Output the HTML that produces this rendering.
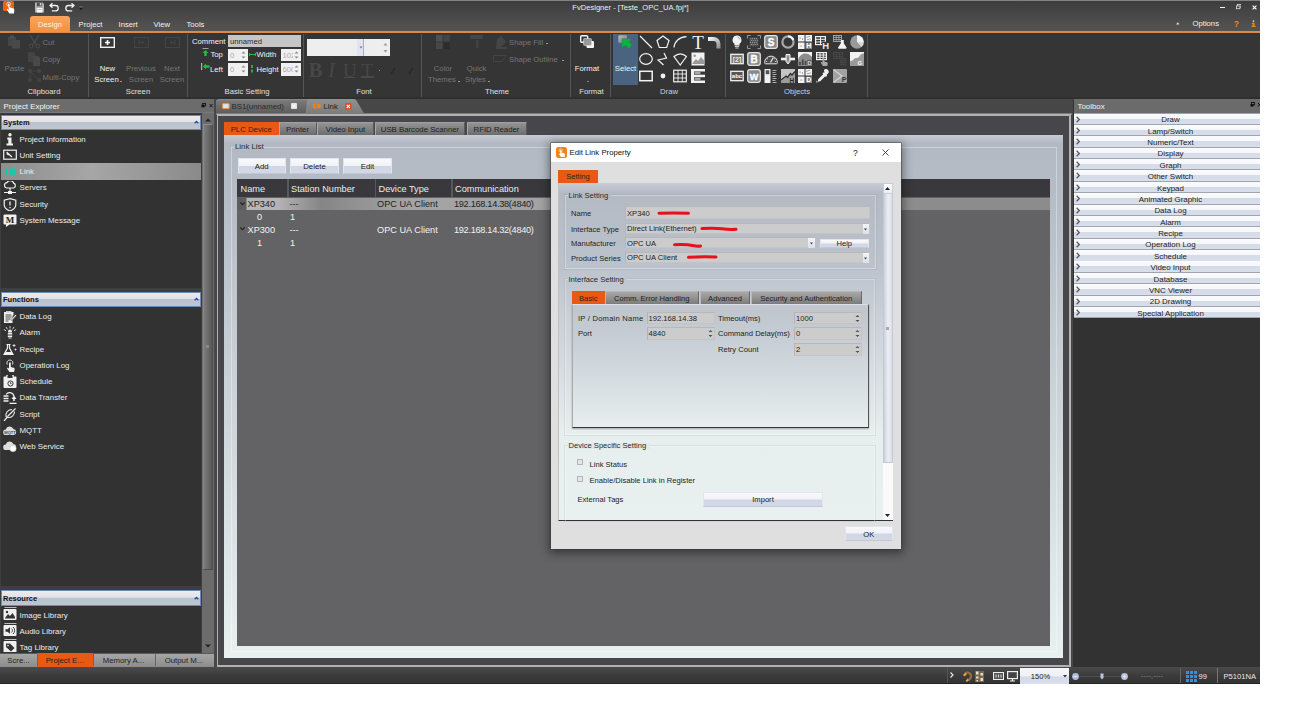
<!DOCTYPE html>
<html><head><meta charset="utf-8"><title>FvDesigner - [Teste_OPC_UA.fpj*]</title>
<style>
*{box-sizing:border-box;margin:0;padding:0}
html,body{width:1300px;height:707px;background:#fff;overflow:hidden}
body{font-family:"Liberation Sans",sans-serif;font-size:8px;color:#e6e6e6;position:relative}
.a{position:absolute}
.t{position:absolute;white-space:nowrap;line-height:10px;height:10px}
.c{text-align:center}
#app{position:absolute;left:0;top:0;width:1260px;height:684px;background:#333;overflow:hidden}
/* title */
#title{left:0;top:0;width:1260px;height:31px;background:linear-gradient(#3d3d3d,#545454);border-top:1px solid #828282}
#oline{left:0;top:31px;width:1260px;height:2px;background:#dc8a48}
#ribbon{left:0;top:33px;width:1260px;height:65px;background:#353535}
.sep{position:absolute;top:34px;width:1px;height:63px;background:#555}
.dis{color:#757575}
.rl{color:#e0e0e0}
/* left */
.ph{background:#6a6a6a;color:#f0f0f0}
.sec{position:absolute;left:1px;width:200px;height:15px;background:linear-gradient(#ececee 0%,#e0e2e6 45%,#bac2d0 50%,#bec6d4 100%);border:1px solid #6f88b8;color:#111;font-weight:bold}
.li{position:absolute;left:19.5px;white-space:nowrap;line-height:10px;color:#ececec}
.ico{position:absolute;left:3px;width:14px;height:13px}
.tb{background:linear-gradient(#949494,#6c6c6c);border-left:1px solid #a8a8a8;border-top:1px solid #a0a0a0;border-right:1px solid #5a5a5a}
.btn{background:linear-gradient(#f8f9fc 0%,#f0f2f8 48%,#d0d6e4 52%,#d3d9e7 100%);border:1px solid #e2e5ee;border-bottom-color:#c2c8d8}
.th{font-size:9.200px;color:#ececec;line-height:11px;height:11px}
.td{font-size:9.200px;color:#f2f2f2;line-height:11px;height:11px}
.tb2{background:linear-gradient(#a8a8a8,#7c7c7c);border-left:1px solid #b8b8b8;border-top:1px solid #b4b4b4;border-right:1px solid #686868}
.gb{border:1px solid rgba(255,255,255,.32);box-shadow:0 0 0 1px rgba(120,135,150,.14)}
.dl{font-size:7.600px;color:#222}
.inp{background:#cccccc;border:1px solid #c4c4c6;border-top-color:#b8b8ba;border-left-color:#b4b4b8}
.dd{background:linear-gradient(#f4f4f8,#dcdfe8)}
.tbi{background:linear-gradient(#fbfbfd 0%,#f6f7fa 45%,#d5dbe7 50%,#d8deea 100%)}
</style></head><body>
<div id="app">
<div id="title" class="a"></div>
<div id="oline" class="a"></div>
<div id="ribbon" class="a"></div>
<!-- part_title.html -->
<!-- app icon -->
<svg class="a" style="left:3px;top:1px" width="14" height="15" viewBox="0 0 14 15"><rect x="0" y="0" width="11" height="10" rx="1.5" fill="#e8631a"/><path d="M5 3.2c0-.9 1.4-.9 1.4 0v3l3.6 1c1 .3 1.4.8 1.300 1.800l-.3 3.500h-4.600l-2.400-3.400c-.5-.8.500-1.500 1.100-.800l.9.900z" fill="#fff"/><circle cx="5.700" cy="3.200" r="1.900" fill="none" stroke="#fff" stroke-width=".6"/></svg>
<!-- quick access -->
<svg class="a" style="left:34px;top:2px" width="50" height="11" viewBox="0 0 50 11"><path d="M1 .5h7.500l1.500 1.500v8.500h-9z" fill="#b4b4b4"/><rect x="2.800" y=".5" width="5" height="3.800" fill="#505050"/><rect x="5.800" y="1" width="1.400" height="2.500" fill="#d0d0d0"/><rect x="2.800" y="6" width="5.600" height="4.500" fill="#fafafa"/><path d="M3.500 7.500h4" stroke="#aaa" stroke-width=".7"/>
<path d="M18.500 1.200l-2.500 2.300 2.500 2.300M16.300 3.500h5.200a2.600 2.600 0 0 1 0 5.400h-3.700" fill="none" stroke="#f0f0f0" stroke-width="1.300"/>
<path d="M37.500 1.200l2.500 2.300-2.500 2.300M39.700 3.500h-5.200a2.600 2.600 0 0 0 0 5.400h3.700" fill="none" stroke="#f0f0f0" stroke-width="1.300"/>
<path d="M45.500 4.800h3" stroke="#888" stroke-width=".7"/><path d="M45.300 6h3.400l-1.700 2z" fill="#151515"/></svg>
<div class="t c" style="left:530.500px;top:2.500px;width:200px;color:#ededed;font-size:7.600px">FvDesigner - [Teste_OPC_UA.fpj*]</div>
<!-- window buttons -->
<div class="a" style="left:1220px;top:6.500px;width:4.500px;height:1.500px;background:#f4f4f4"></div>
<svg class="a" style="left:1235.500px;top:4px" width="5.500" height="5.500" viewBox="0 0 7 7"><rect x="2" y=".5" width="4.500" height="3.500" fill="none" stroke="#ddd" stroke-width="1"/><rect x=".5" y="2.500" width="4.500" height="3.500" fill="#444" stroke="#ddd" stroke-width="1"/></svg>
<svg class="a" style="left:1251.500px;top:4.500px" width="5" height="5" viewBox="0 0 6 6"><path d="M.7.700l4.600 4.600M5.300.700l-4.600 4.600" stroke="#fff" stroke-width="1.400"/></svg>
<!-- menu tabs -->
<div class="a" style="left:30px;top:16px;width:40px;height:16px;background:linear-gradient(#f9a45a,#f4913e);border-radius:3px 3px 0 0"></div>
<div class="t c" style="left:30px;top:20px;width:40px;color:#fff3e6;font-size:7.700px">Design</div>
<div class="t" style="left:78.500px;top:20px;font-size:7.700px;color:#f2f2f2">Project</div>
<div class="t" style="left:118.500px;top:20px;font-size:7.700px;color:#f2f2f2">Insert</div>
<div class="t" style="left:153.500px;top:20px;font-size:7.700px;color:#f2f2f2">View</div>
<div class="t" style="left:186.500px;top:20px;font-size:7.700px;color:#f2f2f2">Tools</div>
<svg class="a" style="left:1175.500px;top:22px" width="3.600" height="2.800" viewBox="0 0 5 4"><path d="M0 3.500l2.500-3 2.500 3z" fill="#ddd"/></svg>
<div class="t" style="left:1192.500px;top:19px;font-size:7.700px;color:#f2f2f2">Options</div>
<div class="t" style="left:1233.800px;top:19px;font-size:8.500px;font-weight:bold;color:#f0821e">?</div>
<svg class="a" style="left:1250.500px;top:20px" width="5" height="7.500" viewBox="0 0 6 9"><circle cx="3" cy="1.300" r="1.100" fill="#ccc"/><path d="M1 3.300h3.300v3.700h1.200v1.500h-5v-1.500h1.500v-2.200h-1z" fill="#f0821e"/></svg>

<!-- part_ribbon.html -->
<!-- separators -->
<div class="sep" style="left:88px"></div><div class="sep" style="left:187px"></div><div class="sep" style="left:303px"></div>
<div class="sep" style="left:421px"></div><div class="sep" style="left:570px"></div><div class="sep" style="left:610px"></div>
<div class="sep" style="left:725px"></div><div class="sep" style="left:867px"></div>
<!-- Clipboard -->
<svg class="a" style="left:8px;top:35px" width="13" height="14" viewBox="0 0 13 14" opacity=".55"><rect x="0" y="2" width="8" height="9" fill="#555"/><rect x="2" y=".5" width="4" height="3" fill="#666"/><rect x="4" y="5" width="8" height="8.500" fill="#5a5a5a"/></svg>
<div class="t dis" style="left:4.500px;top:64px;font-size:7.700px">Paste</div>
<svg class="a" style="left:28px;top:34px" width="13" height="15" viewBox="0 0 13 15"><path d="M2 1l6.500 10M11 1l-6.500 10" stroke="#4c4c4c" stroke-width="1.300" fill="none"/><circle cx="3" cy="12" r="2" fill="none" stroke="#4a4a4a" stroke-width="1"/><circle cx="10" cy="12" r="2" fill="none" stroke="#4a4a4a" stroke-width="1"/></svg>
<div class="t dis" style="left:42.500px;top:37.500px;font-size:7.700px">Cut</div>
<svg class="a" style="left:28px;top:52px" width="13" height="14" viewBox="0 0 13 14"><path d="M0 0h5l2 2v8h-7z" fill="#434343"/><path d="M5 4h5l2 2v8h-7z" fill="#494949"/></svg>
<div class="t dis" style="left:42.500px;top:55px;font-size:7.700px">Copy</div>
<svg class="a" style="left:27px;top:68px" width="15" height="15" viewBox="0 0 15 15"><path d="M3 3l9 0M3 3l0 9M3 3l9 9" stroke="#434343" stroke-width="1" fill="none"/><circle cx="3" cy="3" r="2" fill="#444"/><circle cx="12" cy="3" r="2" fill="#444"/><circle cx="3" cy="12" r="2" fill="#444"/><circle cx="12" cy="12" r="2" fill="#444"/></svg>
<div class="t dis" style="left:42.500px;top:72.500px;font-size:7.700px">Multi-Copy</div>
<div class="t c rl" style="left:14px;top:86.500px;width:60px;font-size:7.700px">Clipboard</div>
<!-- Screen -->
<svg class="a" style="left:100px;top:37px" width="15" height="11" viewBox="0 0 15 11"><rect x=".7" y=".7" width="13.600" height="9.600" fill="none" stroke="#f0f0f0" stroke-width="1.400"/><path d="M5 5.500h5M7.500 3v5" stroke="#fff" stroke-width="1.600"/></svg>
<svg class="a" style="left:134px;top:37px" width="15" height="11" viewBox="0 0 15 11"><rect x=".5" y=".5" width="14" height="10" fill="none" stroke="#444" stroke-width="1"/><path d="M5 3v5M6 5.500h4M8 4l2 1.500-2 1.500" stroke="#444" stroke-width="1" fill="none"/></svg>
<svg class="a" style="left:165px;top:37px" width="15" height="11" viewBox="0 0 15 11"><rect x=".5" y=".5" width="14" height="10" fill="none" stroke="#444" stroke-width="1"/><path d="M10 3v5M5 5.500h4M7 4l-2 1.500 2 1.500" stroke="#444" stroke-width="1" fill="none"/></svg>
<div class="t c" style="left:92px;top:64px;width:31px;font-size:7.700px;color:#f2f2f2">New</div>
<div class="t c" style="left:91px;top:74.500px;width:31px;font-size:7.700px;color:#f2f2f2">Screen</div>
<div class="a" style="left:120px;top:81px;width:2px;height:1px;background:#999"></div>
<div class="t c dis" style="left:121px;top:64px;width:40px;font-size:7.700px">Previous</div>
<div class="t c dis" style="left:121px;top:74.500px;width:40px;font-size:7.700px">Screen</div>
<div class="t c dis" style="left:152px;top:64px;width:40px;font-size:7.700px">Next</div>
<div class="t c dis" style="left:152px;top:74.500px;width:40px;font-size:7.700px">Screen</div>
<div class="t c rl" style="left:108px;top:86.500px;width:60px;font-size:7.700px">Screen</div>
<!-- Basic Setting -->
<div class="t" style="left:192px;top:37px;font-size:7.700px;color:#f4f4f4">Comment</div>
<div class="a" style="left:228px;top:35px;width:73px;height:12px;background:#c6c6c6"></div>
<div class="t" style="left:230px;top:37px;font-size:7.700px;color:#2a2a2a">unnamed</div>
<svg class="a" style="left:202px;top:48px" width="8" height="9" viewBox="0 0 8 9"><path d="M.5.500h6" stroke="#bbb" stroke-width=".8"/><path d="M3.500 2l3 3h-1.800v3h-2.400v-3h-1.800z" fill="#19c13c"/></svg>
<div class="t" style="left:210.500px;top:50px;font-size:7.700px;color:#f4f4f4">Top</div>
<svg class="a" style="left:201px;top:63px" width="10" height="8" viewBox="0 0 10 8"><path d="M.7 0v7" stroke="#ccc" stroke-width="1"/><path d="M2 3.500l3-3v1.800h3.500v2.400h-3.500v1.800z" fill="#19c13c"/></svg>
<div class="t" style="left:210px;top:64.500px;font-size:7.700px;color:#f4f4f4">Left</div>
<div class="a" style="left:228px;top:49px;width:19.500px;height:12px;background:#f0f0f0"></div>
<div class="a" style="left:228px;top:63px;width:19.500px;height:12.500px;background:#f0f0f0"></div>
<div class="a" style="left:281px;top:49px;width:19.500px;height:12px;background:#f0f0f0"></div>
<div class="a" style="left:281px;top:63px;width:19.500px;height:12.500px;background:#f0f0f0"></div>
<div class="t" style="left:230px;top:51px;font-size:7.700px;color:#aaa">0</div>
<div class="t" style="left:230px;top:65px;font-size:7.700px;color:#aaa">0</div>
<div class="t" style="left:282.500px;top:51px;font-size:7.700px;color:#aaa;width:10px;overflow:hidden">102</div>
<div class="t" style="left:282.500px;top:65px;font-size:7.700px;color:#aaa;width:10.500px;overflow:hidden">600</div>
<svg class="a" style="left:241px;top:50px" width="5" height="24" viewBox="0 0 5 24"><path d="M.5 3.500l2-2 2 2zM.5 6.500l2 2 2-2zM.5 17.500l2-2 2 2zM.5 20.500l2 2 2-2z" fill="#888"/></svg>
<svg class="a" style="left:294px;top:50px" width="5" height="24" viewBox="0 0 5 24"><path d="M.5 3.500l2-2 2 2zM.5 6.500l2 2 2-2zM.5 17.500l2-2 2 2zM.5 20.500l2 2 2-2z" fill="#888"/></svg>
<svg class="a" style="left:249px;top:52px" width="7" height="5" viewBox="0 0 7 5"><path d="M0 2.500h7M.5 1v3M6.500 1v3" stroke="#19c13c" stroke-width="1.200"/></svg>
<div class="t" style="left:256.500px;top:50px;font-size:7.700px;color:#f4f4f4">Width</div>
<svg class="a" style="left:250px;top:65px" width="4" height="8" viewBox="0 0 4 8"><path d="M2 0v3M2 4.500v3" stroke="#19c13c" stroke-width="1.800"/></svg>
<div class="t" style="left:256.500px;top:64.500px;font-size:7.700px;color:#f4f4f4">Height</div>
<div class="t c rl" style="left:207px;top:86.500px;width:80px;font-size:7.700px">Basic Setting</div>
<!-- Font -->
<div class="a" style="left:307px;top:39px;width:83px;height:17px;background:#eeeeee"></div>
<div class="a" style="left:357px;top:39px;width:6.500px;height:17px;background:#dfe4f0;border-right:1px solid #a8b0c8"></div>
<svg class="a" style="left:358.500px;top:46px" width="4" height="3" viewBox="0 0 4 3"><path d="M.5.500h3l-1.500 2z" fill="#777"/></svg>
<svg class="a" style="left:383px;top:42px" width="5" height="12" viewBox="0 0 5 12"><path d="M.5 3.500l2-2.500 2 2.500zM.5 8l2 2.500 2-2.500z" fill="#999"/></svg>
<div class="t" style="left:308.500px;top:58px;font-family:'Liberation Serif',serif;font-weight:bold;font-size:21px;line-height:24px;height:24px;color:#474747">B</div>
<div class="t" style="left:328px;top:58px;font-family:'Liberation Serif',serif;font-style:italic;font-size:21px;line-height:24px;height:24px;color:#474747">I</div>
<div class="t" style="left:343px;top:58.500px;font-family:'Liberation Serif',serif;font-size:19px;line-height:24px;height:24px;color:#464646">U</div>
<div class="a" style="left:343.500px;top:77px;width:11px;height:1px;background:#4c4c4c"></div>
<div class="t" style="left:361.500px;top:58.500px;font-family:'Liberation Serif',serif;font-size:19px;line-height:24px;height:24px;color:#464646">T</div>
<div class="a" style="left:361px;top:75.500px;width:13px;height:2px;background:#4a4a4a"></div>
<div class="a" style="left:378.500px;top:70px;width:1.500px;height:1px;background:#999"></div>
<svg class="a" style="left:390px;top:66px" width="26" height="10" viewBox="0 0 26 10"><path d="M1 8l4-6M19 8l4-6" stroke="#2a2a2a" stroke-width="1.600"/></svg>
<div class="t c rl" style="left:334px;top:86.500px;width:60px;font-size:7.700px">Font</div>
<!-- Theme -->
<svg class="a" style="left:436px;top:35px" width="14" height="14" viewBox="0 0 14 14"><rect x="0" y="0" width="6.500" height="6.500" fill="#505050"/><rect x="7.500" y="0" width="6.500" height="6.500" fill="#444"/><rect x="0" y="7.500" width="6.500" height="6.500" fill="#484848"/><rect x="7.500" y="7.500" width="6.500" height="6.500" fill="#2c2c2c"/></svg>
<svg class="a" style="left:470px;top:35px" width="14" height="14" viewBox="0 0 14 14"><rect x="0" y="0" width="13" height="4" rx="1" fill="#454545"/><rect x="6" y="5" width="2.500" height="8" fill="#414141"/></svg>
<div class="t c dis" style="left:423px;top:64px;width:40px;font-size:7.700px">Color</div>
<div class="t c dis" style="left:422px;top:74.500px;width:40px;font-size:7.700px">Themes</div>
<div class="a" style="left:458px;top:81px;width:2px;height:1px;background:#999"></div>
<div class="t c dis" style="left:456.500px;top:64px;width:40px;font-size:7.700px">Quick</div>
<div class="t c dis" style="left:455.500px;top:74.500px;width:40px;font-size:7.700px">Styles</div>
<div class="a" style="left:488px;top:81px;width:2px;height:1px;background:#999"></div>
<svg class="a" style="left:494px;top:35px" width="14" height="14" viewBox="0 0 14 14"><path d="M3 4l4-3 5 6-5 5h-5z" fill="#454545"/><path d="M2 13h11" stroke="#4a4a4a" stroke-width="1.500"/></svg>
<div class="t dis" style="left:509px;top:37.500px;font-size:7.700px">Shape Fill</div>
<div class="a" style="left:546px;top:43px;width:2px;height:1px;background:#999"></div>
<svg class="a" style="left:493px;top:54px" width="15" height="10" viewBox="0 0 15 10"><path d="M.5 1.500h9.500l3 0-4 6h-8.500z" fill="none" stroke="#444" stroke-width="1"/></svg>
<div class="t dis" style="left:509px;top:55px;font-size:7.700px">Shape Outline</div>
<div class="a" style="left:562px;top:60px;width:2px;height:1px;background:#999"></div>
<div class="t c rl" style="left:467px;top:86.500px;width:60px;font-size:7.700px">Theme</div>
<!-- Format -->
<svg class="a" style="left:580px;top:35px" width="15" height="14" viewBox="0 0 15 14"><rect x=".7" y=".7" width="7" height="6.500" rx="1" fill="#3a3a3a" stroke="#f4f4f4" stroke-width="1.400"/><rect x="6.500" y="6" width="7.500" height="7" rx="1" fill="#f4f4f4"/><rect x="3.500" y="3.500" width="8" height="7" rx="1" fill="#9a9a9a" stroke="#e8e8e8" stroke-width=".5"/></svg>
<div class="t c" style="left:567px;top:64px;width:40px;font-size:7.700px;color:#f4f4f4">Format</div>
<div class="a" style="left:586.500px;top:80.500px;width:2px;height:1px;background:#888"></div>
<div class="t c rl" style="left:561.500px;top:86.500px;width:60px;font-size:7.700px">Format</div>
<!-- Draw -->
<div class="a" style="left:613px;top:34px;width:25px;height:51px;background:#4a647f"></div>
<svg class="a" style="left:617px;top:35px" width="16" height="14" viewBox="0 0 16 14"><defs><linearGradient id="sg" x1="0" y1="0" x2="1" y2="1"><stop offset="0" stop-color="#bdbdbd"/><stop offset="1" stop-color="#7e7e7e"/></linearGradient></defs><path d="M2.300.200h6.800q.8 0 .8.800v2.500h-5.200v4.200h-2.400q-.9 0-.9-.9v-5.700q0-.9.900-.9z" fill="url(#sg)"/><path d="M5.200 4h8.900l-2.100 2.900 2.800 3.200-3 3.400-2.900-3.400-3.700 2z" fill="#06b53c"/></svg>
<div class="t c" style="left:613px;top:63.500px;width:25px;font-size:7.700px;color:#eef2f6">Select</div>
<div class="t c rl" style="left:639px;top:86.500px;width:60px;font-size:7.700px;color:#c8d0dc">Draw</div>
<div class="t c rl" style="left:767px;top:86.500px;width:60px;font-size:7.700px;color:#c8d0dc">Objects</div>
<svg class="a" style="left:639.0px;top:34.8px" width="14" height="14" viewBox="0 0 14 14"><path d="M1 1l12 12" stroke="#f2f2f2" stroke-width="1.300"/></svg>
<svg class="a" style="left:656.0px;top:34.8px" width="14" height="14" viewBox="0 0 14 14"><path d="M7 1l6 4.500-2.300 7h-7.400l-2.300-7z" fill="none" stroke="#f2f2f2" stroke-width="1.200"/></svg>
<svg class="a" style="left:673.4px;top:34.8px" width="14" height="14" viewBox="0 0 14 14"><path d="M1 12.500c.5-6 5-10.500 12.500-10.800" fill="none" stroke="#f2f2f2" stroke-width="1.200"/></svg>
<svg class="a" style="left:690.6px;top:34.8px" width="14" height="14" viewBox="0 0 14 14"><text x="7" y="13.500" text-anchor="middle" font-family="Liberation Serif,serif" font-size="19" fill="#f2f2f2">T</text></svg>
<svg class="a" style="left:707.8px;top:34.8px" width="14" height="14" viewBox="0 0 14 14"><defs><linearGradient id="pg" x1="0" y1="0" x2="1" y2="1"><stop offset="0" stop-color="#fff"/><stop offset="1" stop-color="#888"/></linearGradient></defs><path d="M0 2h5.500a7 7 0 0 1 7 7v4.500h-4v-4.500a3 3 0 0 0-3-3h-5.500z" fill="url(#pg)"/></svg>
<svg class="a" style="left:639.0px;top:51.9px" width="14" height="14" viewBox="0 0 14 14"><ellipse cx="7" cy="7" rx="6.300" ry="5.300" fill="none" stroke="#f2f2f2" stroke-width="1.200"/></svg>
<svg class="a" style="left:656.0px;top:51.9px" width="14" height="14" viewBox="0 0 14 14"><path d="M8 1l2.500 5-8.500 2 5.500 5" fill="none" stroke="#f2f2f2" stroke-width="1.200"/></svg>
<svg class="a" style="left:673.4px;top:51.9px" width="14" height="14" viewBox="0 0 14 14"><path d="M1 4.500c4-3.500 8.500-3.500 12.500 0l-6.300 8.500z" fill="none" stroke="#f2f2f2" stroke-width="1.200"/></svg>
<svg class="a" style="left:690.6px;top:51.9px" width="14" height="14" viewBox="0 0 14 14"><rect x=".5" y=".5" width="13" height="13" fill="#f2f2f2"/><path d="M1.500 11l3.500-4 2 2 3-4 3 3.500v3.500h-11.500z" fill="#9a9a9a"/><circle cx="3.700" cy="3.700" r="1.300" fill="#9a9a9a"/></svg>
<svg class="a" style="left:639.0px;top:69.0px" width="14" height="14" viewBox="0 0 14 14"><rect x=".8" y="2.300" width="12.400" height="9.400" fill="none" stroke="#f2f2f2" stroke-width="1.500"/></svg>
<svg class="a" style="left:656.0px;top:69.0px" width="14" height="14" viewBox="0 0 14 14"><circle cx="7" cy="7" r="2.400" fill="#f2f2f2"/></svg>
<svg class="a" style="left:673.4px;top:69.0px" width="14" height="14" viewBox="0 0 14 14"><rect x=".7" y="1.200" width="12.600" height="11.600" fill="none" stroke="#f2f2f2" stroke-width="1.200"/><path d="M.7 5h12.600M.7 9h12.600M5 1.200v11.600M9.300 1.200v11.600" stroke="#f2f2f2" stroke-width=".9"/></svg>
<svg class="a" style="left:690.6px;top:69.0px" width="14" height="14" viewBox="0 0 14 14"><rect x="0" y="0" width="3" height="14" fill="#f2f2f2"/><rect x="3" y="0" width="11" height="2.500" fill="#f2f2f2"/><rect x="3" y="5.700" width="11" height="2.500" fill="#f2f2f2"/><rect x="3" y="11.500" width="11" height="2.500" fill="#f2f2f2"/><rect x="3.500" y="3" width="6" height="2.200" fill="#a8a8a8"/><rect x="3.500" y="8.700" width="6" height="2.200" fill="#a8a8a8"/></svg>
<svg class="a" style="left:730.0px;top:35.0px" width="14" height="14" viewBox="0 0 14 14"><path d="M7 .5a4.500 4.500 0 0 1 2.500 8.200v1.800h-5v-1.800a4.500 4.500 0 0 1 2.500-8.200z" fill="#f2f2f2"/><path d="M4.800 11.500h4.400M5.300 13h3.400" stroke="#c8c8c8" stroke-width="1"/><path d="M7.500 2a3 3 0 0 1 2.300 2.500" stroke="#888" stroke-width=".7" fill="none"/></svg>
<svg class="a" style="left:747.0px;top:35.0px" width="14" height="14" viewBox="0 0 14 14"><path d="M.5 3.500v-3h3M10.500 .5h3v3M13.500 10.500v3h-3M3.500 13.500h-3v-3" fill="none" stroke="#999" stroke-width="1"/><rect x="2.500" y="2.500" width="9" height="9" fill="#4a4a4a"/><path d="M3 3.500h8M3.700 5.500h7.300M3 7.500h8M3.700 9.500h7.300" stroke="#8e8e8e" stroke-width="1.100" stroke-dasharray="1.200 .8"/><path d="M3 4.500h8M3 6.500h8M3 8.500h8M3 10.500h8" stroke="#777" stroke-width=".6" stroke-dasharray=".8 1.400"/></svg>
<svg class="a" style="left:764.0px;top:35.0px" width="14" height="14" viewBox="0 0 14 14"><rect x=".7" y=".7" width="12.600" height="12.600" rx="2.200" fill="#8a8a8a" stroke="#e4e4e4" stroke-width="1.200"/><text x="7" y="10.800" text-anchor="middle" font-family="Liberation Sans,sans-serif" font-weight="bold" font-size="10" fill="#fff" stroke="#fff" stroke-width=".35">S</text></svg>
<svg class="a" style="left:781.0px;top:35.0px" width="14" height="14" viewBox="0 0 14 14"><circle cx="7" cy="7" r="5.600" fill="none" stroke="#a8a8a8" stroke-width="2.200"/><path d="M7 1.400a5.600 5.600 0 0 1 5.300 3.800" fill="none" stroke="#f2f2f2" stroke-width="2.200"/></svg>
<svg class="a" style="left:798.0px;top:35.0px" width="14" height="14" viewBox="0 0 14 14"><rect x="0" y="0" width="6.500" height="6.500" fill="#f2f2f2"/><rect x="7.500" y="0" width="6.500" height="6.500" fill="#f2f2f2"/><rect x="0" y="7.500" width="6.500" height="6.500" fill="#f2f2f2"/><rect x="7.500" y="7.500" width="6.500" height="6.500" fill="#858585"/><path d="M2 3h.1M4.500 4h.1M9 2h.1M11 1.500h.1M12 4h.1M10 4.500h.1M3 11h.1" stroke="#555" stroke-width="1.100" stroke-linecap="round"/><text x="10.800" y="13.300" text-anchor="middle" font-family="Liberation Sans,sans-serif" font-weight="bold" font-size="7" fill="#fff">H</text></svg>
<svg class="a" style="left:815.4px;top:35.0px" width="14" height="14" viewBox="0 0 14 14"><rect x=".6" y="1.600" width="9.800" height="8" fill="none" stroke="#f2f2f2" stroke-width="1.200"/><path d="M.6 4.300h9.800M.6 7h9.800M5.500 1.600v8" stroke="#f2f2f2" stroke-width="1"/><rect x="7" y="6.800" width="7" height="7.200" fill="#363636"/><text x="10.700" y="13.800" text-anchor="middle" font-family="Liberation Sans,sans-serif" font-weight="bold" font-size="9.500" fill="#e8e8e8">H</text></svg>
<svg class="a" style="left:832.5px;top:35.0px" width="14" height="14" viewBox="0 0 14 14"><rect x=".5" y=".5" width="8" height="6" fill="none" stroke="#aaa" stroke-width=".9"/><path d="M.5 2.500h8M.5 4.500h8M3.200 .5v6M5.900 .5v6" stroke="#aaa" stroke-width=".8"/><path d="M7.800 5h3v3.200l2.700 4.300c.3.700 0 1.200-.8 1.200h-6.800c-.8 0-1.100-.5-.8-1.200l2.700-4.300z" fill="#f2f2f2"/></svg>
<svg class="a" style="left:849.5px;top:35.0px" width="14" height="14" viewBox="0 0 14 14"><circle cx="7" cy="7" r="6.800" fill="#9a9a9a"/><path d="M7 7v-6.800a6.800 6.800 0 0 1 6.800 6.800z" fill="#f2f2f2"/><path d="M7 7h6.800a6.800 6.800 0 0 1-2.300 5z" fill="#d8d8d8"/></svg>
<svg class="a" style="left:730.0px;top:52.0px" width="14" height="14" viewBox="0 0 14 14"><rect x=".8" y="2.300" width="12.400" height="9.400" fill="#777" stroke="#f2f2f2" stroke-width="1.300"/><text x="7" y="9.800" text-anchor="middle" font-family="Liberation Sans,sans-serif" font-weight="bold" font-size="7" fill="#e8e8e8">[2]</text></svg>
<svg class="a" style="left:747.0px;top:52.0px" width="14" height="14" viewBox="0 0 14 14"><rect x=".7" y=".7" width="12.600" height="12.600" rx="2.200" fill="#8a8a8a" stroke="#e4e4e4" stroke-width="1.200"/><text x="7" y="10.800" text-anchor="middle" font-family="Liberation Sans,sans-serif" font-weight="bold" font-size="10" fill="#fff" stroke="#fff" stroke-width=".35">B</text></svg>
<svg class="a" style="left:764.0px;top:52.0px" width="14" height="14" viewBox="0 0 14 14"><path d="M.6 10.500a6.400 6.400 0 0 1 12.800 0c0 .8-.3 1.300-1 1.300h-10.800c-.7 0-1-.5-1-1.300z" fill="#4c4c4c" stroke="#e0e0e0" stroke-width="1"/><path d="M6.500 10.500l2.800-5" stroke="#ddd" stroke-width="1.400"/><path d="M2.500 9.500h.1M3.300 6.700h.1M5.700 4.700h.1M10.700 6.700h.1M11.500 9.500h.1" stroke="#ddd" stroke-width="1.100" stroke-linecap="round"/></svg>
<svg class="a" style="left:781.0px;top:52.0px" width="14" height="14" viewBox="0 0 14 14"><rect x="0" y="5.700" width="14" height="2.600" fill="#f2f2f2"/><path d="M5 2.500h4v7l-2 2.500-2-2.500z" fill="#a8a8a8" stroke="#f2f2f2" stroke-width="1"/><path d="M7 4.500v4" stroke="#666" stroke-width="1"/></svg>
<svg class="a" style="left:798.0px;top:52.0px" width="14" height="14" viewBox="0 0 14 14"><rect x="0" y="0" width="14" height="14" fill="#f2f2f2"/><path d="M0 8c2-7 9-9 14-3v9h-14z" fill="#8c8c8c"/><path d="M2 10v3M4.800 7.500v5.500M7.600 9v4" stroke="#444" stroke-width="1.700"/><rect x="9.300" y="8" width="4.200" height="5.300" fill="#555"/><text x="11.400" y="12.700" text-anchor="middle" font-family="Liberation Sans,sans-serif" font-weight="bold" font-size="5.500" fill="#ddd">D</text></svg>
<svg class="a" style="left:815.4px;top:52.0px" width="14" height="14" viewBox="0 0 14 14"><rect x="1.600" y=".6" width="9.800" height="7" fill="none" stroke="#f2f2f2" stroke-width="1.200"/><path d="M1.600 3h9.800M1.600 5.300h9.800M5 .6v7M8.300 .6v7" stroke="#f2f2f2" stroke-width="1"/><path d="M7.500 6.500c0-1.300 1.800-1.300 1.800 0v3l2.500.7c.9.300 1 .8.900 1.500l-.4 2.300h-4.300l-2-3c-.4-.8.600-1.400 1.100-.700l.4.500z" fill="#a8a8a8"/></svg>
<svg class="a" style="left:832.5px;top:52.0px" width="14" height="14" viewBox="0 0 14 14"><rect x=".5" y=".5" width="9" height="6" fill="none" stroke="#484848" stroke-width=".9"/><path d="M.5 2.500h9M.5 4.500h9M3.500 .5v6M6.500 .5v6" stroke="#484848" stroke-width=".8"/><path d="M7 6.500h6.500M7 8.500h6.500M7 10.500h6.500M7 12.500h6.500" stroke="#454545" stroke-width="1.300"/></svg>
<svg class="a" style="left:849.5px;top:52.0px" width="14" height="14" viewBox="0 0 14 14"><rect x="0" y="0" width="14" height="14" fill="#9a9a9a"/><path d="M0 0h14v1.500c-2 0-3 .5-4 2s-1.500 2.500-3 2.500-2.500 0-3.500 1.500-2 1.500-3.500 1.800z" fill="#f2f2f2"/><text x="9.800" y="12.800" text-anchor="middle" font-family="Liberation Sans,sans-serif" font-weight="bold" font-size="6" fill="#fff">G</text></svg>
<svg class="a" style="left:730.0px;top:69.0px" width="14" height="14" viewBox="0 0 14 14"><rect x=".8" y="2.300" width="12.400" height="9.400" fill="#555" stroke="#f2f2f2" stroke-width="1.300"/><text x="7" y="9.300" text-anchor="middle" font-family="Liberation Sans,sans-serif" font-weight="bold" font-size="6" fill="#fff">abc</text></svg>
<svg class="a" style="left:747.0px;top:69.0px" width="14" height="14" viewBox="0 0 14 14"><rect x=".7" y=".7" width="12.600" height="12.600" rx="2.200" fill="#8a8a8a" stroke="#e4e4e4" stroke-width="1.200"/><text x="7" y="10.800" text-anchor="middle" font-family="Liberation Sans,sans-serif" font-weight="bold" font-size="9" fill="#fff" stroke="#fff" stroke-width=".35">W</text></svg>
<svg class="a" style="left:764.0px;top:69.0px" width="14" height="14" viewBox="0 0 14 14"><rect x=".5" y="0" width="6" height="14" fill="#f2f2f2"/><rect x="1.700" y="1.200" width="3.600" height="4" fill="#555"/><path d="M8.500 1.500h4M8.500 3.500h3M8.500 5.500h4M8.500 7.500h3M8.500 9.500h4M8.500 11.500h3M8.500 13.500h4" stroke="#bbb" stroke-width=".9"/></svg>
<svg class="a" style="left:781.0px;top:69.0px" width="14" height="14" viewBox="0 0 14 14"><rect x="0" y="0" width="14" height="14" fill="#9c9c9c"/><path d="M0 0h14v2.500l-3 3.500-1.500-1.500-3 4-1.500-1.500-5 4z" fill="#c4c4c4"/><path d="M0 11l5-4 1.500 1.500 3-4 1.500 1.500 3-3.500" fill="none" stroke="#2e2e2e" stroke-width="1.300"/><text x="10.800" y="13.500" text-anchor="middle" font-family="Liberation Sans,sans-serif" font-weight="bold" font-size="6.500" fill="#2a2a2a">H</text></svg>
<svg class="a" style="left:798.0px;top:69.0px" width="14" height="14" viewBox="0 0 14 14"><rect x="0" y="0" width="6.500" height="6.500" fill="#f2f2f2"/><rect x="7.500" y="0" width="6.500" height="6.500" fill="#f2f2f2"/><rect x="0" y="7.500" width="6.500" height="6.500" fill="#f2f2f2"/><rect x="7.500" y="7.500" width="6.500" height="6.500" fill="#858585"/><path d="M2 3h.1M4.500 4h.1M9 2h.1M11 1.500h.1M12 4h.1M10 4.500h.1M3 11h.1" stroke="#555" stroke-width="1.100" stroke-linecap="round"/><text x="10.800" y="13.300" text-anchor="middle" font-family="Liberation Sans,sans-serif" font-weight="bold" font-size="7" fill="#fff">D</text></svg>
<svg class="a" style="left:815.4px;top:69.0px" width="14" height="14" viewBox="0 0 14 14"><path d="M9 1a2.600 2.600 0 0 1 4 3.500l-1.500 1.500.7.700-1.300 1.300-.7-.7-5 5-2.500.5.500-2.500 5-5-.7-.7 1.300-1.300.7.700z" fill="#f2f2f2"/><circle cx="1.800" cy="12.800" r="1" fill="#999"/></svg>
<svg class="a" style="left:832.5px;top:69.0px" width="14" height="14" viewBox="0 0 14 14"><rect x="0" y="0" width="14" height="14" rx="1" fill="#a2a2a2"/><path d="M.5 .5l8.500 6.500-8.500 6.500" fill="none" stroke="#d4d4d4" stroke-width="1.200"/><text x="11" y="13" text-anchor="middle" font-family="Liberation Sans,sans-serif" font-weight="bold" font-size="7" fill="#333">P</text></svg>

<!-- part_left.html -->
<div class="a ph" style="left:0;top:98.500px;width:214.500px;height:15.500px;background:linear-gradient(#6c6c6c 0,#6c6c6c 13.500px,#787878 13.500px)"></div>
<div class="t" style="left:3.500px;top:101.500px;font-size:7.900px;color:#f4f4f4">Project Explorer</div>
<svg class="a" style="left:200.500px;top:102.500px" width="13" height="6" viewBox="0 0 13 6"><rect x="1.700" y=".5" width="2.800" height="2.300" fill="none" stroke="#111" stroke-width=".9"/><rect x=".5" y="1.800" width="3" height="2.500" fill="#111"/><path d="M8.700 1l2.800 3.200M11.500 1l-2.800 3.200" stroke="#111" stroke-width=".9"/></svg>
<div class="a" style="left:0;top:113px;width:214px;height:540px;background:#3e3e3e"></div>
<div class="a" style="left:1px;top:114px;width:200px;height:539px;background:#323232"></div>
<div class="a" style="left:201.500px;top:113px;width:13px;height:540px;background:#6c6c6c;border-right:1px solid #7a7a7a"></div>
<div class="a" style="left:202.500px;top:124px;width:10.500px;height:446px;background:linear-gradient(90deg,#7c7c7c,#6a6a6a 50%,#585858);border-top:1px solid #8a8a8a;border-left:1px solid #888;border-right:1px solid #4c4c4c;border-bottom:1px solid #4c4c4c"></div>
<svg class="a" style="left:204.500px;top:117.500px" width="6" height="4" viewBox="0 0 6 4"><path d="M0 3.500l3-3 3 3z" fill="#222"/></svg>
<svg class="a" style="left:204.500px;top:644px" width="6" height="4" viewBox="0 0 6 4"><path d="M0 .5l3 3 3-3z" fill="#222"/></svg>
<div class="a" style="left:206px;top:345px;width:3px;height:3px;background:#888"></div>
<div class="sec" style="top:114.5px;height:15.5px"></div>
<div class="t" style="left:3px;top:118.2px;font-size:7.500px;font-weight:bold;color:#111">System</div>
<svg class="a" style="left:193.500px;top:120.0px" width="5" height="4" viewBox="0 0 5 4"><path d="M.7 3.200l1.800-1.800 1.800 1.800" fill="none" stroke="#2446a8" stroke-width="1.300"/></svg>
<div class="sec" style="top:291.5px;height:15.5px"></div>
<div class="t" style="left:3px;top:295.2px;font-size:7.500px;font-weight:bold;color:#111">Functions</div>
<svg class="a" style="left:193.500px;top:297.0px" width="5" height="4" viewBox="0 0 5 4"><path d="M.7 3.200l1.800-1.800 1.800 1.800" fill="none" stroke="#2446a8" stroke-width="1.300"/></svg>
<div class="sec" style="top:590px;height:15.5px"></div>
<div class="t" style="left:3px;top:593.7px;font-size:7.500px;font-weight:bold;color:#111">Resource</div>
<svg class="a" style="left:193.500px;top:595.5px" width="5" height="4" viewBox="0 0 5 4"><path d="M.7 3.200l1.800-1.800 1.800 1.800" fill="none" stroke="#2446a8" stroke-width="1.300"/></svg>
<div class="a" style="left:0;top:288px;width:201px;height:3.500px;background:#3e3e3e"></div>
<div class="a" style="left:0;top:586px;width:201px;height:4px;background:#3e3e3e"></div>
<div class="a" style="left:1px;top:163px;width:200px;height:16.500px;background:linear-gradient(90deg,#8e8e8e 0%,#a6a6a6 45%,#9a9a9a 70%,#8a8a8a 100%)"></div>
<svg class="ico" style="top:133.0px" viewBox="0 0 14 13"><circle cx="7" cy="1.800" r="1.700" fill="#f0f0f0"/><path d="M4.500 4.500h4v6h1.500v2h-6.500v-2h1.800v-4h-1.300z" fill="#f0f0f0"/></svg>
<div class="li" style="top:135.1px;font-size:7.900px">Project Information</div>
<svg class="ico" style="top:149.3px" viewBox="0 0 14 13"><rect x=".7" y="1.200" width="12.600" height="9" fill="none" stroke="#f0f0f0" stroke-width="1.200"/><path d="M4 3.500l5 4.500M4.500 3a1.500 1.500 0 0 0 1.500 2.500" stroke="#f0f0f0" stroke-width="1.300" fill="none"/></svg>
<div class="li" style="top:151.4px;font-size:7.900px">Unit Setting</div>
<svg class="ico" style="top:165.2px" viewBox="0 0 14 13"><path d="M5.400 2.900a3.600 3.600 0 1 0 0 7.200 6 6 0 0 1 0-7.200z" fill="#12ccaa"/><circle cx="9.700" cy="6.500" r="3.500" fill="#12ccaa"/></svg>
<div class="li" style="top:167.3px;font-size:7.900px">Link</div>
<svg class="ico" style="top:181.2px" viewBox="0 0 14 13"><path d="M3.500 7a2.700 2.700 0 0 1 .4-5.300 3.600 3.600 0 0 1 6.700.5 2.500 2.500 0 0 1 0 4.800z" fill="none" stroke="#f0f0f0" stroke-width="1.200"/><path d="M7 7v4M1 11.500h12" stroke="#f0f0f0" stroke-width="1.200"/><rect x="5" y="10" width="4" height="3" fill="#f0f0f0"/></svg>
<div class="li" style="top:183.3px;font-size:7.900px">Servers</div>
<svg class="ico" style="top:197.5px" viewBox="0 0 14 13"><path d="M7 .7l5.800 1.500v4.500c0 3-2.500 5-5.800 6.300-3.300-1.300-5.800-3.300-5.800-6.300v-4.500z" fill="none" stroke="#f0f0f0" stroke-width="1.200"/><path d="M7 3.500v4M7 9v1.300" stroke="#f0f0f0" stroke-width="1.300"/></svg>
<div class="li" style="top:199.6px;font-size:7.900px">Security</div>
<svg class="ico" style="top:213.8px" viewBox="0 0 14 13"><path d="M1.500 .5h11a1 1 0 0 1 1 1v8a1 1 0 0 1-1 1h-6l-3.500 2.500v-2.500h-1.500a1 1 0 0 1-1-1v-8a1 1 0 0 1 1-1z" fill="#f0f0f0"/><text x="7" y="9" text-anchor="middle" font-family="Liberation Serif,serif" font-weight="bold" font-size="9" fill="#222">M</text></svg>
<div class="li" style="top:215.9px;font-size:7.900px">System Message</div>
<svg class="ico" style="top:310.0px" viewBox="0 0 14 13"><path d="M1 2h9.500v3l-1 1v7h-8.500z" fill="#f0f0f0"/><path d="M2.500 5h6M2.500 7h6M2.500 9h5M2.500 11h3" stroke="#333" stroke-width=".9"/><path d="M3 1h5.500v1.500h-5.500z" fill="#ccc"/><path d="M12.500 4.500l1 1-4 4.500-1.500.5.500-1.500z" fill="#f0f0f0" stroke="#333" stroke-width=".4"/></svg>
<div class="li" style="top:312.1px;font-size:7.900px">Data Log</div>
<svg class="ico" style="top:326.3px" viewBox="0 0 14 13"><path d="M5 5.500a2 2 0 0 1 4 0v1h-4z" fill="#f0f0f0"/><path d="M4.800 7.500h4.400M4.800 9h4.400M4.800 10.500h4.400M5.500 12h3" stroke="#f0f0f0" stroke-width="1"/><path d="M7 0v2.500M3 1l1.500 2.300M11 1l-1.500 2.300M.8 3.500l2.400 1.300M13.200 3.500l-2.400 1.300" stroke="#f0f0f0" stroke-width=".8"/></svg>
<div class="li" style="top:328.4px;font-size:7.900px">Alarm</div>
<svg class="ico" style="top:342.5px" viewBox="0 0 14 13"><path d="M3.500 1.500h4M4.500 1.500v3.500l-3.500 6.500h9l-3.500-6.500v-3.500" fill="none" stroke="#f0f0f0" stroke-width="1.200"/><path d="M2.500 9h6l1.500 2.500h-9z" fill="#f0f0f0"/><path d="M11 1v3M9.500 2.500h3M12.500 5.500v2M11.500 6.500h2" stroke="#f0f0f0" stroke-width=".8"/></svg>
<div class="li" style="top:344.6px;font-size:7.900px">Recipe</div>
<svg class="ico" style="top:358.5px" viewBox="0 0 14 13"><path d="M6 4.200c0-1.200 1.800-1.200 1.800 0v3.800l2.800.8c1 .3 1.200 1 1 1.800l-.5 2.400h-4.600l-2.300-3.300c-.5-.8.600-1.500 1.200-.700l.6.700z" fill="#f0f0f0"/><path d="M4.300 5.500a3 3 0 1 1 5.200 0" fill="none" stroke="#f0f0f0" stroke-width=".9"/></svg>
<div class="li" style="top:360.6px;font-size:7.900px">Operation Log</div>
<svg class="ico" style="top:374.8px" viewBox="0 0 14 13"><rect x=".5" y="1.500" width="13" height="11.500" rx="1" fill="#f0f0f0"/><path d="M4 0v3M10 0v3" stroke="#f0f0f0" stroke-width="1.500"/><circle cx="7.500" cy="8.500" r="2.600" fill="none" stroke="#333" stroke-width="1"/><path d="M7.500 7v1.700h1.200" stroke="#333" stroke-width=".8" fill="none"/><rect x="4.500" y="1" width="5" height="2" fill="#333"/></svg>
<div class="li" style="top:376.9px;font-size:7.900px">Schedule</div>
<svg class="ico" style="top:391.1px" viewBox="0 0 14 13"><path d="M.5 5h5M.5 7.500h5M.5 10h5" stroke="#f0f0f0" stroke-width="1.700"/><path d="M3 3.500a4.500 4.500 0 0 1 8 1.500" fill="none" stroke="#f0f0f0" stroke-width="1.200"/><path d="M8.500 8l2.500-3.500 2.500 3.500h-1.700v2h-1.600v-2z" fill="#f0f0f0"/><path d="M6.500 12.500h7" stroke="#f0f0f0" stroke-width="1.600"/></svg>
<div class="li" style="top:393.2px;font-size:7.900px">Data Transfer</div>
<svg class="ico" style="top:407.5px" viewBox="0 0 14 13"><path d="M12.500 .5l-8 8M9 1.500c-4 0-6.500 3-6 7l1.500 1c4 .5 7-2 7-6" fill="none" stroke="#f0f0f0" stroke-width="1.100"/><path d="M1 13l3-3.500" stroke="#f0f0f0" stroke-width="1.200"/></svg>
<div class="li" style="top:409.6px;font-size:7.900px">Script</div>
<svg class="ico" style="top:423.5px" viewBox="0 0 14 13"><path d="M3 11a2.700 2.700 0 0 1-.2-5.400 4 4 0 0 1 7.600-.5 3 3 0 0 1 .6 5.900z" fill="#ddd"/><text x="7" y="9.800" text-anchor="middle" font-family="Liberation Sans,sans-serif" font-weight="bold" font-size="4" fill="#444">MQTT</text></svg>
<div class="li" style="top:425.6px;font-size:7.900px">MQTT</div>
<svg class="ico" style="top:439.5px" viewBox="0 0 14 13"><path d="M3 10a2.700 2.700 0 0 1-.2-5.400 4 4 0 0 1 7.600-.5 3 3 0 0 1 .6 5.900z" fill="#ddd"/><circle cx="10" cy="8.500" r="3.200" fill="#fff" stroke="#bbb" stroke-width=".5"/></svg>
<div class="li" style="top:441.6px;font-size:7.900px">Web Service</div>
<svg class="ico" style="top:607.0px" viewBox="0 0 14 13"><path d="M1.500 .5h12" stroke="#bbb" stroke-width="1"/><rect x=".5" y="2" width="13" height="11" rx="1" fill="#f0f0f0"/><path d="M2 11l3-4 2 2 2.500-3 2.500 4v1.500h-10z" fill="#333"/><circle cx="4" cy="5" r="1.200" fill="#333"/></svg>
<div class="li" style="top:610.6px;font-size:7.900px">Image Library</div>
<svg class="ico" style="top:623.0px" viewBox="0 0 14 13"><path d="M1.500 .5h12" stroke="#bbb" stroke-width="1"/><rect x=".5" y="2" width="13" height="11" rx="1" fill="#f0f0f0"/><path d="M2.500 6.200h2l2.500-2v6.600l-2.500-2h-2z" fill="#333"/><path d="M8.500 5.500a2.500 2.500 0 0 1 0 4M10 4a4.500 4.500 0 0 1 0 7" fill="none" stroke="#333" stroke-width=".9"/></svg>
<div class="li" style="top:626.6px;font-size:7.900px">Audio Library</div>
<svg class="ico" style="top:639.2px" viewBox="0 0 14 13"><path d="M1.500 .5h12" stroke="#bbb" stroke-width="1"/><rect x=".5" y="2" width="13" height="12" rx="1" fill="#f0f0f0"/><path d="M3 4.500h4l4.500 4.500-3.500 3.500-5-4.500z" fill="#333"/><circle cx="5" cy="6.500" r=".8" fill="#fff"/></svg>
<div class="li" style="top:642.8px;font-size:7.900px">Tag Library</div>
<div class="a" style="left:0;top:652.500px;width:214.500px;height:14px;background:linear-gradient(#a6a6a6,#8c8c8c);border-top:1px solid #5a5a5a"></div>
<div class="a" style="left:37px;top:653px;width:55.500px;height:13.500px;background:#e85a14"></div>
<div class="a" style="left:92.500px;top:654px;width:1px;height:12px;background:#666"></div><div class="a" style="left:154.500px;top:654px;width:1px;height:12px;background:#666"></div><div class="a" style="left:37px;top:654px;width:1px;height:12px;background:#666"></div>
<div class="t c" style="left:0px;top:655.500px;width:37px;font-size:7.800px;color:#222">Scre...</div>
<div class="t c" style="left:37px;top:655.500px;width:55.5px;font-size:7.800px;color:#222">Project E...</div>
<div class="t c" style="left:92.5px;top:655.500px;width:62px;font-size:7.800px;color:#222">Memory A...</div>
<div class="t c" style="left:154.5px;top:655.500px;width:59px;font-size:7.800px;color:#222">Output M...</div>
<!-- part_center.html -->
<!-- strip below ribbon -->
<div class="a" style="left:0;top:97px;width:1260px;height:1.500px;background:#2f2f2f"></div>
<div class="a" style="left:214px;top:99px;width:859px;height:568px;background:#474747"></div>
<!-- doc tabs -->
<div class="a" style="left:216px;top:99px;width:98px;height:14px;background:linear-gradient(#7c7c7c,#5c5c5c);border-radius:3px 0 0 0;border-top:1px solid #8a8a8a"></div>
<svg class="a" style="left:300px;top:98px" width="70" height="15.500" viewBox="0 0 70 15.500"><defs><linearGradient id="lt" x1="0" y1="0" x2="0" y2="1"><stop offset="0" stop-color="#929292"/><stop offset="1" stop-color="#7c7c7c"/></linearGradient></defs><path d="M5.500 15.500l1.500-12c.3-1.800 1-2.500 3-2.500h43c2 0 3 .5 4 2.500l5 8.500c1 1.800 2 3.500 4.500 3.500z" fill="url(#lt)"/></svg>
<svg class="a" style="left:221.500px;top:103px" width="8" height="7" viewBox="0 0 8 7"><rect x=".6" y=".6" width="6.500" height="5" rx=".6" fill="#dfe3ea" stroke="#e89048" stroke-width="1"/></svg>
<div class="t" style="left:231.500px;top:101.500px;font-size:7.800px;color:#2c2c2c">BS1(unnamed)</div>
<svg class="a" style="left:291px;top:103px" width="6" height="6" viewBox="0 0 6 6"><rect width="6" height="6" rx=".8" fill="#e4e4e4"/><path d="M1.500 1.500l3 3M4.500 1.500l-3 3" stroke="#fff" stroke-width="1"/></svg>
<svg class="a" style="left:313px;top:103px" width="8" height="6" viewBox="0 0 8 6"><path d="M3.200.300a2.800 2.800 0 1 0 0 5.400 4.500 4.500 0 0 1 0-5.400z" fill="#f0821e"/><circle cx="5.700" cy="3" r="2.200" fill="#f0821e"/></svg>
<div class="t" style="left:323.500px;top:101.500px;font-size:7.800px;color:#1c1c1c">Link</div>
<svg class="a" style="left:345px;top:102.500px" width="7" height="7" viewBox="0 0 7 7"><rect width="6.500" height="6.500" rx="1" fill="#e84a28"/><path d="M1.800 1.800l3 3M4.800 1.800l-3 3" stroke="#fff" stroke-width="1.100"/></svg>
<!-- doc frame -->
<div class="a" style="left:216px;top:113px;width:856px;height:2px;background:#7c7c7c"></div>
<div class="a" style="left:217px;top:114px;width:854px;height:552.500px;background:#47474b;border:2px solid #b2b2b2;border-left-width:1.500px"></div>
<!-- tab strip -->
<div class="a" style="left:224px;top:122px;width:54.500px;height:13px;background:#e85a14"></div>
<div class="t c" style="left:224px;top:124.500px;width:54.500px;font-size:7.800px;color:#35221a">PLC Device</div>
<div class="a tb" style="left:278.500px;top:122px;width:38px;height:13px"></div><div class="t c" style="left:278.500px;top:124.500px;width:38px;font-size:7.800px;color:#222">Printer</div>
<div class="a tb" style="left:317px;top:122px;width:57px;height:13px"></div><div class="t c" style="left:317px;top:124.500px;width:57px;font-size:7.800px;color:#222">Video Input</div>
<div class="a tb" style="left:375px;top:122px;width:90px;height:13px"></div><div class="t c" style="left:375px;top:124.500px;width:90px;font-size:7.800px;color:#222">USB Barcode Scanner</div>
<div class="a tb" style="left:466.500px;top:122px;width:60px;height:13px"></div><div class="t c" style="left:466.500px;top:124.500px;width:60px;font-size:7.800px;color:#222">RFID Reader</div>
<!-- tab panel -->
<div class="a" style="left:224px;top:135px;width:839px;height:523px;background:linear-gradient(#c6cad2 0px,#b3b9c3 8px,#b6bcc6 60px,#e8f0f0 100%)"></div>
<!-- group box -->
<div class="a" style="left:230.500px;top:147px;width:826.500px;height:504.500px;border:1px solid rgba(255,255,255,.34)"></div>
<div class="a" style="left:234px;top:144px;width:29px;height:6px;background:#b4bac4"></div>
<div class="t" style="left:235px;top:142px;font-size:7.800px;color:#2a2a2a">Link List</div>
<!-- buttons -->
<div class="a btn" style="left:237.500px;top:158px;width:48.500px;height:16px"></div><div class="t c" style="left:237.500px;top:161.500px;width:48.500px;font-size:7.800px;color:#222">Add</div>
<div class="a btn" style="left:290px;top:158px;width:49px;height:16px"></div><div class="t c" style="left:290px;top:161.500px;width:49px;font-size:7.800px;color:#222">Delete</div>
<div class="a btn" style="left:343px;top:158px;width:49px;height:16px"></div><div class="t c" style="left:343px;top:161.500px;width:49px;font-size:7.800px;color:#222">Edit</div>
<!-- table -->
<div class="a" style="left:237px;top:178.500px;width:812.500px;height:467px;background:#636365"></div>
<div class="a" style="left:237px;top:178.500px;width:812.500px;height:18.500px;background:#39393d"></div>
<div class="a" style="left:287px;top:178.500px;width:1.500px;height:18.500px;background:#58585c"></div>
<div class="a" style="left:374.500px;top:178.500px;width:1.500px;height:18.500px;background:#58585c"></div>
<div class="a" style="left:451px;top:178.500px;width:1.500px;height:18.500px;background:#58585c"></div>
<div class="t th" style="left:240.500px;top:183.800px">Name</div>
<div class="t th" style="left:291px;top:183.800px">Station Number</div>
<div class="t th" style="left:378.500px;top:183.800px">Device Type</div>
<div class="t th" style="left:455px;top:183.800px">Communication</div>
<div class="a" style="left:237px;top:197.500px;width:812.500px;height:12px;background:linear-gradient(90deg,#5e5e5e 0,#5e5e5e 9px,#b6b6b6 10px,#b4b4b4 40px,#858585 85px,#a4a4a4 170px,#a2a2a2 320px,#8c8c8c 520px,#8c8c8c 100%)"></div>
<svg class="a" style="left:240px;top:201.500px" width="5" height="4" viewBox="0 0 5 4"><path d="M.3.500l2.200 2.200 2.200-2.200" fill="none" stroke="#222" stroke-width="1.100"/></svg>
<svg class="a" style="left:240px;top:227px" width="5" height="4" viewBox="0 0 5 4"><path d="M.3.500l2.200 2.200 2.200-2.200" fill="none" stroke="#222" stroke-width="1.100"/></svg>
<div class="t td" style="left:247.500px;top:199px;color:#1e1e1e">XP340</div>
<div class="t td" style="left:289.500px;top:199px;color:#333">---</div>
<div class="t td" style="left:377px;top:199px;color:#1e1e1e">OPC UA Client</div>
<div class="t td" style="left:454px;top:199px;color:#1e1e1e;letter-spacing:-.3px">192.168.14.38(4840)</div>
<div class="t td" style="left:257px;top:211.500px">0</div><div class="t td" style="left:290px;top:211.500px">1</div>
<div class="t td" style="left:247.500px;top:224.500px">XP300</div>
<div class="t td" style="left:289.500px;top:224.500px">---</div>
<div class="t td" style="left:377px;top:224.500px">OPC UA Client</div>
<div class="t td" style="left:454px;top:224.500px;letter-spacing:-.3px">192.168.14.32(4840)</div>
<div class="t td" style="left:257px;top:237.500px">1</div><div class="t td" style="left:290px;top:237.500px">1</div>

<!-- part_dialog.html -->
<!-- dialog shadow + frame -->
<div class="a" style="left:550.500px;top:143px;width:350.500px;height:406px;background:#dfdfdf;box-shadow:0 2px 9px 2px rgba(0,0,0,.45),0 0 0 .5px #555"></div>
<div class="a" style="left:550.500px;top:143px;width:350.500px;height:19px;background:#ffffff"></div>
<svg class="a" style="left:556px;top:146.500px" width="11" height="11" viewBox="0 0 11 11"><rect width="11" height="11" rx="2.500" fill="#f0841c"/><path d="M4.200 3.300c0-.9 1.300-.9 1.300 0v2.200l2.500.7c.8.200 1 .7.900 1.400l-.3 2.400h-3.600l-1.900-2.700c-.4-.6.400-1.200.9-.6l.2.300z" fill="#fff"/><circle cx="4.800" cy="3.300" r="1.600" fill="none" stroke="#fff" stroke-width=".5"/></svg>
<div class="t" style="left:569.500px;top:147.500px;font-size:7.750px;color:#111">Edit Link Property</div>
<div class="t" style="left:853px;top:147.500px;font-size:8.500px;color:#111">?</div>
<svg class="a" style="left:881.500px;top:148.500px" width="7" height="7" viewBox="0 0 7 7"><path d="M.5.500l6 6M6.500.500l-6 6" stroke="#333" stroke-width=".9"/></svg>
<!-- Setting tab -->
<div class="a" style="left:558px;top:170px;width:40px;height:13.500px;background:#e85a14"></div>
<div class="t c" style="left:558px;top:172px;width:40px;font-size:7.600px;color:#35221a">Setting</div>
<!-- scroll area -->
<div class="a" style="left:558px;top:183px;width:335px;height:337.500px;background:linear-gradient(#c8ccd4 0px,#b4bac4 10px,#bcc2cc 80px,#e6eeee 250px,#e8f0f0 100%);border-right:1px solid #444;border-bottom:1px solid #333;border-left:1px solid #c0c0c0"></div>
<!-- scrollbar -->
<div class="a" style="left:882.500px;top:183px;width:10px;height:337px;background:#fafafa"></div>
<div class="a" style="left:882.500px;top:183px;width:10px;height:279.500px;background:linear-gradient(90deg,#ccd0da,#eceef4 50%,#dcdfe8);border:1px solid #c4c8d4"></div>
<div class="a" style="left:882.500px;top:183px;width:10px;height:11px;background:linear-gradient(#fff,#eceef4);border:1px solid #c8ccd6"></div>
<svg class="a" style="left:885px;top:187px" width="5" height="3" viewBox="0 0 5 3"><path d="M0 3l2.500-3 2.500 3z" fill="#222"/></svg>
<svg class="a" style="left:885px;top:513.500px" width="5" height="3" viewBox="0 0 5 3"><path d="M0 0l2.500 3 2.500-3z" fill="#222"/></svg>
<div class="a" style="left:886px;top:327px;width:3px;height:3px;background:#aaa"></div>
<!-- Link Setting group -->
<div class="a gb" style="left:565px;top:195px;width:310.500px;height:73.500px"></div>
<div class="a" style="left:567.500px;top:192px;width:43px;height:6px;background:#b5bbc5"></div>
<div class="t" style="left:568.500px;top:190.500px;font-size:7.600px;color:#2a2a2a">Link Setting</div>
<div class="t dl" style="left:571px;top:208.500px">Name</div>
<div class="t dl" style="left:571px;top:224.500px">Interface Type</div>
<div class="t dl" style="left:571px;top:239px">Manufacturer</div>
<div class="t dl" style="left:571px;top:253.500px">Product Series</div>
<div class="a inp" style="left:625px;top:206px;width:244.500px;height:13px"></div>
<div class="a inp" style="left:625px;top:223px;width:244.500px;height:11px"></div>
<div class="a inp" style="left:625px;top:237px;width:190px;height:11px"></div>
<div class="a inp" style="left:625px;top:252px;width:244.500px;height:11px"></div>
<div class="a dd" style="left:862.500px;top:224px;width:6.500px;height:9.500px"></div>
<div class="a dd" style="left:808px;top:238px;width:6.500px;height:9.500px"></div>
<div class="a dd" style="left:862.500px;top:253px;width:6.500px;height:9.500px"></div>
<div class="t dl" style="left:627px;top:208.500px">XP340</div>
<div class="t dl" style="left:627px;top:224px">Direct Link(Ethernet)</div>
<div class="t dl" style="left:627px;top:238.500px">OPC UA</div>
<div class="t dl" style="left:627px;top:253px">OPC UA Client</div>
<div class="a btn" style="left:819.500px;top:238.500px;width:49.500px;height:9px"></div>
<div class="t c" style="left:819.500px;top:238.500px;width:49.500px;font-size:7.600px;color:#222">Help</div>
<svg class="a" style="left:864px;top:227.5px" width="3" height="3" viewBox="0 0 3 3"><path d="M0 .5h3l-1.500 2z" fill="#444"/></svg>
<svg class="a" style="left:809.5px;top:242px" width="3" height="3" viewBox="0 0 3 3"><path d="M0 .5h3l-1.500 2z" fill="#444"/></svg>
<svg class="a" style="left:864px;top:256.5px" width="3" height="3" viewBox="0 0 3 3"><path d="M0 .5h3l-1.500 2z" fill="#444"/></svg>
<!-- red marks -->
<svg class="a" style="left:655px;top:208px" width="90" height="55" viewBox="0 0 90 55"><g fill="none" stroke="#e8101c" stroke-width="3" stroke-linecap="round"><path d="M4 5.200q14-.6 29.500 0"/><path d="M47 20.600q12-.8 20 .2t14 .5"/><path d="M19.500 36.700q12-.5 18 .8t8 .5"/><path d="M33.500 49.300q14-1 27.500-.3"/></g></svg>
<!-- Interface Setting group -->
<div class="a gb" style="left:565px;top:279px;width:310px;height:155.500px"></div>
<div class="a" style="left:567.500px;top:276px;width:59px;height:6px;background:#c0c6d0"></div>
<div class="t" style="left:568.500px;top:274.500px;font-size:7.600px;color:#2a2a2a">Interface Setting</div>
<div class="a" style="left:572px;top:290.500px;width:32.500px;height:13.500px;background:#e85a14"></div>
<div class="t c" style="left:572px;top:293.500px;width:32.500px;font-size:7.600px;color:#35221a">Basic</div>
<div class="a tb2" style="left:604.500px;top:290.500px;width:94.500px;height:13.500px"></div><div class="t c" style="left:604.500px;top:293.500px;width:94.500px;font-size:7.600px;color:#222">Comm. Error Handling</div>
<div class="a tb2" style="left:700px;top:290.500px;width:50px;height:13.500px"></div><div class="t c" style="left:700px;top:293.500px;width:50px;font-size:7.600px;color:#222">Advanced</div>
<div class="a tb2" style="left:751px;top:290.500px;width:110.500px;height:13.500px"></div><div class="t c" style="left:751px;top:293.500px;width:110.500px;font-size:7.600px;color:#222">Security and Authentication</div>
<div class="a" style="left:572px;top:304px;width:296.500px;height:124px;background:linear-gradient(#c4c8d0 0px,#c0c6ce 6px,#c6ccd4 30px,#e6eeee 100%);border-top:1px solid #dde1e7;border-right:1px solid #555;border-bottom:1.500px solid #383838;border-left:1px solid #aaa;box-shadow:0 1px 1.500px rgba(0,0,0,.3)"></div>
<div class="t dl" style="left:578px;top:313.500px;letter-spacing:.22px">IP / Domain Name</div>
<div class="t dl" style="left:578px;top:328.500px">Port</div>
<div class="t dl" style="left:718px;top:313.500px">Timeout(ms)</div>
<div class="t dl" style="left:718px;top:328.500px">Command Delay(ms)</div>
<div class="t dl" style="left:718px;top:344.500px">Retry Count</div>
<div class="a inp" style="left:646.500px;top:311.500px;width:68px;height:12.500px"></div>
<div class="a inp" style="left:646.500px;top:327px;width:68px;height:12.500px"></div>
<div class="a inp" style="left:794px;top:311.500px;width:68px;height:12.500px"></div>
<div class="a inp" style="left:794px;top:327px;width:68px;height:12.500px"></div>
<div class="a inp" style="left:794px;top:343px;width:68px;height:12.500px"></div>
<div class="t dl" style="left:648.500px;top:313.500px">192.168.14.38</div>
<div class="t dl" style="left:648.500px;top:329px">4840</div>
<div class="t dl" style="left:796px;top:313.500px">1000</div>
<div class="t dl" style="left:796px;top:329px">0</div>
<div class="t dl" style="left:796px;top:345px">2</div>
<svg class="a" style="left:707.500px;top:329px" width="5" height="9" viewBox="0 0 5 9"><path d="M.5 3l2-2 2 2zM.5 6l2 2 2-2z" fill="#505050"/></svg>
<svg class="a" style="left:855px;top:313.500px" width="5" height="9" viewBox="0 0 5 9"><path d="M.5 3l2-2 2 2zM.5 6l2 2 2-2z" fill="#505050"/></svg>
<svg class="a" style="left:855px;top:329px" width="5" height="9" viewBox="0 0 5 9"><path d="M.5 3l2-2 2 2zM.5 6l2 2 2-2z" fill="#505050"/></svg>
<svg class="a" style="left:855px;top:345px" width="5" height="9" viewBox="0 0 5 9"><path d="M.5 3l2-2 2 2zM.5 6l2 2 2-2z" fill="#505050"/></svg>
<!-- Device Specific Setting -->
<div class="a gb" style="left:565px;top:445.500px;width:310px;height:75px;border-bottom:none"></div>
<div class="a" style="left:567.500px;top:442.500px;width:82px;height:6px;background:#e2e9ea"></div>
<div class="t" style="left:568.500px;top:441px;font-size:7.600px;color:#2a2a2a">Device Specific Setting</div>
<div class="a" style="left:577px;top:459px;width:6px;height:6px;background:#e4e4e8;border:1px solid #b4b4bc"></div>
<div class="a" style="left:577px;top:476px;width:6px;height:6px;background:#e4e4e8;border:1px solid #b4b4bc"></div>
<div class="t dl" style="left:589.500px;top:459.500px">Link Status</div>
<div class="t dl" style="left:589.500px;top:476px">Enable/Disable Link in Register</div>
<div class="t dl" style="left:577.500px;top:495px">External Tags</div>
<div class="a btn" style="left:703px;top:491.500px;width:120px;height:15.500px"></div>
<div class="t c" style="left:703px;top:495px;width:120px;font-size:7.600px;color:#222">Import</div>
<!-- OK -->
<div class="a btn" style="left:844.500px;top:526px;width:48.500px;height:15px"></div>
<div class="t c" style="left:844.500px;top:529.500px;width:48.500px;font-size:7.600px;color:#222">OK</div>

<!-- part_tool.html -->
<div class="a" style="left:1073px;top:99px;width:187px;height:568px;background:#323232"></div>
<div class="a" style="left:1073.500px;top:99px;width:187px;height:14px;background:#6b6b6b"></div>
<div class="t" style="left:1077.500px;top:102px;font-size:7.900px;color:#f4f4f4">Toolbox</div>
<svg class="a" style="left:1250px;top:102px" width="12" height="6" viewBox="0 0 12 6"><rect x="1.500" y=".5" width="3" height="2.500" fill="none" stroke="#111" stroke-width=".9"/><rect x=".5" y="2" width="3" height="2.500" fill="#111"/><path d="M8 1l3 3.500M11 1l-3 3.500" stroke="#111" stroke-width="1"/></svg>
<div class="a" style="left:1073.500px;top:113px;width:187px;height:205.3px;background:#a0a4ae"></div>
<div class="a tbi" style="left:1074px;top:113.50px;width:186px;height:10.48px"></div>
<svg class="a" style="left:1075.500px;top:115.50px" width="4" height="7" viewBox="0 0 4 7"><path d="M.6.800l2.700 2.700-2.700 2.700" fill="none" stroke="#5c5c5c" stroke-width="1.250"/></svg>
<div class="t c" style="left:1084px;top:115.30px;width:173px;font-size:7.950px;color:#1e1e1e">Draw</div>
<div class="a tbi" style="left:1074px;top:124.88px;width:186px;height:10.48px"></div>
<svg class="a" style="left:1075.500px;top:126.88px" width="4" height="7" viewBox="0 0 4 7"><path d="M.6.800l2.700 2.700-2.700 2.700" fill="none" stroke="#5c5c5c" stroke-width="1.250"/></svg>
<div class="t c" style="left:1084px;top:126.68px;width:173px;font-size:7.950px;color:#1e1e1e">Lamp/Switch</div>
<div class="a tbi" style="left:1074px;top:136.26px;width:186px;height:10.48px"></div>
<svg class="a" style="left:1075.500px;top:138.26px" width="4" height="7" viewBox="0 0 4 7"><path d="M.6.800l2.700 2.700-2.700 2.700" fill="none" stroke="#5c5c5c" stroke-width="1.250"/></svg>
<div class="t c" style="left:1084px;top:138.06px;width:173px;font-size:7.950px;color:#1e1e1e">Numeric/Text</div>
<div class="a tbi" style="left:1074px;top:147.64px;width:186px;height:10.48px"></div>
<svg class="a" style="left:1075.500px;top:149.64px" width="4" height="7" viewBox="0 0 4 7"><path d="M.6.800l2.700 2.700-2.700 2.700" fill="none" stroke="#5c5c5c" stroke-width="1.250"/></svg>
<div class="t c" style="left:1084px;top:149.44px;width:173px;font-size:7.950px;color:#1e1e1e">Display</div>
<div class="a tbi" style="left:1074px;top:159.02px;width:186px;height:10.48px"></div>
<svg class="a" style="left:1075.500px;top:161.02px" width="4" height="7" viewBox="0 0 4 7"><path d="M.6.800l2.700 2.700-2.700 2.700" fill="none" stroke="#5c5c5c" stroke-width="1.250"/></svg>
<div class="t c" style="left:1084px;top:160.82px;width:173px;font-size:7.950px;color:#1e1e1e">Graph</div>
<div class="a tbi" style="left:1074px;top:170.40px;width:186px;height:10.48px"></div>
<svg class="a" style="left:1075.500px;top:172.40px" width="4" height="7" viewBox="0 0 4 7"><path d="M.6.800l2.700 2.700-2.700 2.700" fill="none" stroke="#5c5c5c" stroke-width="1.250"/></svg>
<div class="t c" style="left:1084px;top:172.20px;width:173px;font-size:7.950px;color:#1e1e1e">Other Switch</div>
<div class="a tbi" style="left:1074px;top:181.78px;width:186px;height:10.48px"></div>
<svg class="a" style="left:1075.500px;top:183.78px" width="4" height="7" viewBox="0 0 4 7"><path d="M.6.800l2.700 2.700-2.700 2.700" fill="none" stroke="#5c5c5c" stroke-width="1.250"/></svg>
<div class="t c" style="left:1084px;top:183.58px;width:173px;font-size:7.950px;color:#1e1e1e">Keypad</div>
<div class="a tbi" style="left:1074px;top:193.16px;width:186px;height:10.48px"></div>
<svg class="a" style="left:1075.500px;top:195.16px" width="4" height="7" viewBox="0 0 4 7"><path d="M.6.800l2.700 2.700-2.700 2.700" fill="none" stroke="#5c5c5c" stroke-width="1.250"/></svg>
<div class="t c" style="left:1084px;top:194.96px;width:173px;font-size:7.950px;color:#1e1e1e">Animated Graphic</div>
<div class="a tbi" style="left:1074px;top:204.54px;width:186px;height:10.48px"></div>
<svg class="a" style="left:1075.500px;top:206.54px" width="4" height="7" viewBox="0 0 4 7"><path d="M.6.800l2.700 2.700-2.700 2.700" fill="none" stroke="#5c5c5c" stroke-width="1.250"/></svg>
<div class="t c" style="left:1084px;top:206.34px;width:173px;font-size:7.950px;color:#1e1e1e">Data Log</div>
<div class="a tbi" style="left:1074px;top:215.92px;width:186px;height:10.48px"></div>
<svg class="a" style="left:1075.500px;top:217.92px" width="4" height="7" viewBox="0 0 4 7"><path d="M.6.800l2.700 2.700-2.700 2.700" fill="none" stroke="#5c5c5c" stroke-width="1.250"/></svg>
<div class="t c" style="left:1084px;top:217.72px;width:173px;font-size:7.950px;color:#1e1e1e">Alarm</div>
<div class="a tbi" style="left:1074px;top:227.30px;width:186px;height:10.48px"></div>
<svg class="a" style="left:1075.500px;top:229.30px" width="4" height="7" viewBox="0 0 4 7"><path d="M.6.800l2.700 2.700-2.700 2.700" fill="none" stroke="#5c5c5c" stroke-width="1.250"/></svg>
<div class="t c" style="left:1084px;top:229.10px;width:173px;font-size:7.950px;color:#1e1e1e">Recipe</div>
<div class="a tbi" style="left:1074px;top:238.68px;width:186px;height:10.48px"></div>
<svg class="a" style="left:1075.500px;top:240.68px" width="4" height="7" viewBox="0 0 4 7"><path d="M.6.800l2.700 2.700-2.700 2.700" fill="none" stroke="#5c5c5c" stroke-width="1.250"/></svg>
<div class="t c" style="left:1084px;top:240.48px;width:173px;font-size:7.950px;color:#1e1e1e">Operation Log</div>
<div class="a tbi" style="left:1074px;top:250.06px;width:186px;height:10.48px"></div>
<svg class="a" style="left:1075.500px;top:252.06px" width="4" height="7" viewBox="0 0 4 7"><path d="M.6.800l2.700 2.700-2.700 2.700" fill="none" stroke="#5c5c5c" stroke-width="1.250"/></svg>
<div class="t c" style="left:1084px;top:251.86px;width:173px;font-size:7.950px;color:#1e1e1e">Schedule</div>
<div class="a tbi" style="left:1074px;top:261.44px;width:186px;height:10.48px"></div>
<svg class="a" style="left:1075.500px;top:263.44px" width="4" height="7" viewBox="0 0 4 7"><path d="M.6.800l2.700 2.700-2.700 2.700" fill="none" stroke="#5c5c5c" stroke-width="1.250"/></svg>
<div class="t c" style="left:1084px;top:263.24px;width:173px;font-size:7.950px;color:#1e1e1e">Video Input</div>
<div class="a tbi" style="left:1074px;top:272.82px;width:186px;height:10.48px"></div>
<svg class="a" style="left:1075.500px;top:274.82px" width="4" height="7" viewBox="0 0 4 7"><path d="M.6.800l2.700 2.700-2.700 2.700" fill="none" stroke="#5c5c5c" stroke-width="1.250"/></svg>
<div class="t c" style="left:1084px;top:274.62px;width:173px;font-size:7.950px;color:#1e1e1e">Database</div>
<div class="a tbi" style="left:1074px;top:284.20px;width:186px;height:10.48px"></div>
<svg class="a" style="left:1075.500px;top:286.20px" width="4" height="7" viewBox="0 0 4 7"><path d="M.6.800l2.700 2.700-2.700 2.700" fill="none" stroke="#5c5c5c" stroke-width="1.250"/></svg>
<div class="t c" style="left:1084px;top:286.00px;width:173px;font-size:7.950px;color:#1e1e1e">VNC Viewer</div>
<div class="a tbi" style="left:1074px;top:295.58px;width:186px;height:10.48px"></div>
<svg class="a" style="left:1075.500px;top:297.58px" width="4" height="7" viewBox="0 0 4 7"><path d="M.6.800l2.700 2.700-2.700 2.700" fill="none" stroke="#5c5c5c" stroke-width="1.250"/></svg>
<div class="t c" style="left:1084px;top:297.38px;width:173px;font-size:7.950px;color:#1e1e1e">2D Drawing</div>
<div class="a tbi" style="left:1074px;top:306.96px;width:186px;height:10.48px"></div>
<svg class="a" style="left:1075.500px;top:308.96px" width="4" height="7" viewBox="0 0 4 7"><path d="M.6.800l2.700 2.700-2.700 2.700" fill="none" stroke="#5c5c5c" stroke-width="1.250"/></svg>
<div class="t c" style="left:1084px;top:308.76px;width:173px;font-size:7.950px;color:#1e1e1e">Special Application</div>
<!-- part_status.html -->
<div class="a" style="left:0;top:667px;width:1260px;height:17px;background:linear-gradient(#4a4a4a,#3a3a3a 60%,#343434);border-bottom:1px solid #1c2430"></div>
<div class="a" style="left:947px;top:667px;width:1px;height:16px;background:#555"></div>
<svg class="a" style="left:949.500px;top:672px" width="4" height="6" viewBox="0 0 4 6"><path d="M.5.500l2.500 2.500-2.500 2.500" fill="none" stroke="#eee" stroke-width="1.100"/></svg>
<svg class="a" style="left:961px;top:670px" width="13" height="12" viewBox="0 0 13 12"><path d="M3.800 3.800a3.600 3.600 0 1 1 2.200 6" fill="none" stroke="#8c6c42" stroke-width="2.500"/><path d="M2 5l2.300-2.300 1.600 1.600-2.300 2.300z" fill="#f0a030"/><path d="M4.500 10.800l2.300-2.300 1 1.800-1.600 1.600z" fill="#f0a030"/></svg>
<svg class="a" style="left:975px;top:670.500px" width="9" height="11" viewBox="0 0 9 11"><rect width="9" height="11" fill="#7c6648"/><path d="M1 .5h2.500v3h-2.500zM5.500 2h2.500v2.500h-2.500zM1 5.500h2.500v2h-2.500zM5.500 7h2.500v3h-2.500zM1.500 9h1.500v1.500h-1.500z" fill="#e4e0d8"/></svg>
<svg class="a" style="left:993px;top:671.500px" width="11" height="8" viewBox="0 0 11 8"><rect x=".5" y=".5" width="10" height="7" fill="#555" stroke="#eee" stroke-width="1"/><path d="M3 2.500v3M5.500 2.500v3M8 2.500v3" stroke="#ddd" stroke-width="1"/></svg>
<svg class="a" style="left:1006.500px;top:670.500px" width="11" height="11" viewBox="0 0 11 11"><rect x=".6" y=".6" width="9.800" height="7" fill="#444" stroke="#eee" stroke-width="1.200"/><path d="M5.500 7.500v2M3 10h5" stroke="#eee" stroke-width="1.200"/></svg>
<div class="a" style="left:1020px;top:668px;width:49px;height:15.500px;background:linear-gradient(#f6f6fa 0%,#eef0f6 50%,#d4dae8 55%,#d8deea 100%)"></div>
<div class="t c" style="left:1020px;top:671.500px;width:41px;font-size:7.600px;color:#222">150%</div>
<svg class="a" style="left:1062.500px;top:674.500px" width="4" height="3" viewBox="0 0 4 3"><path d="M0 0h4l-2 2.500z" fill="#333"/></svg>
<div class="a" style="left:1077px;top:675.500px;width:46px;height:1px;background:#4e4e4e"></div>
<svg class="a" style="left:1071.500px;top:672.500px" width="7" height="7" viewBox="0 0 7 7"><circle cx="3.500" cy="3.500" r="3.400" fill="#aebbd8"/><path d="M1.500 3.500h4" stroke="#e8ecf6" stroke-width="1.200"/></svg>
<svg class="a" style="left:1121px;top:672.500px" width="7" height="7" viewBox="0 0 7 7"><circle cx="3.500" cy="3.500" r="3.400" fill="#b4c0dc"/><path d="M1.500 3.500h4M3.500 1.500v4" stroke="#dfe5f2" stroke-width="1"/></svg>
<svg class="a" style="left:1099.500px;top:672.500px" width="4" height="7" viewBox="0 0 4 7"><path d="M.5.500h3v4l-1.500 2-1.500-2z" fill="#bcc6e0"/></svg>
<div class="t" style="left:1141px;top:671px;font-size:7px;color:#888;letter-spacing:.2px">----,----</div>
<div class="a" style="left:1180px;top:668px;width:1px;height:15px;background:#666"></div>
<svg class="a" style="left:1186px;top:670.500px" width="11" height="11" viewBox="0 0 11 11"><path d="M0 0h3v3h-3zM4 0h3v3h-3zM8 0h3v3h-3zM0 4h3v3h-3zM4 4h3v3h-3zM8 4h3v3h-3zM0 8h3v3h-3zM4 8h3v3h-3zM8 8h3v3h-3z" fill="#3a8ee0"/></svg>
<div class="t" style="left:1198.500px;top:671.500px;font-size:7.600px;color:#e8e8e8">99</div>
<div class="a" style="left:1216.500px;top:668px;width:1px;height:15px;background:#777"></div>
<div class="t" style="left:1223.500px;top:671.500px;font-size:7.600px;color:#e8e8e8">P5101NA</div>

</div>
</body></html>
